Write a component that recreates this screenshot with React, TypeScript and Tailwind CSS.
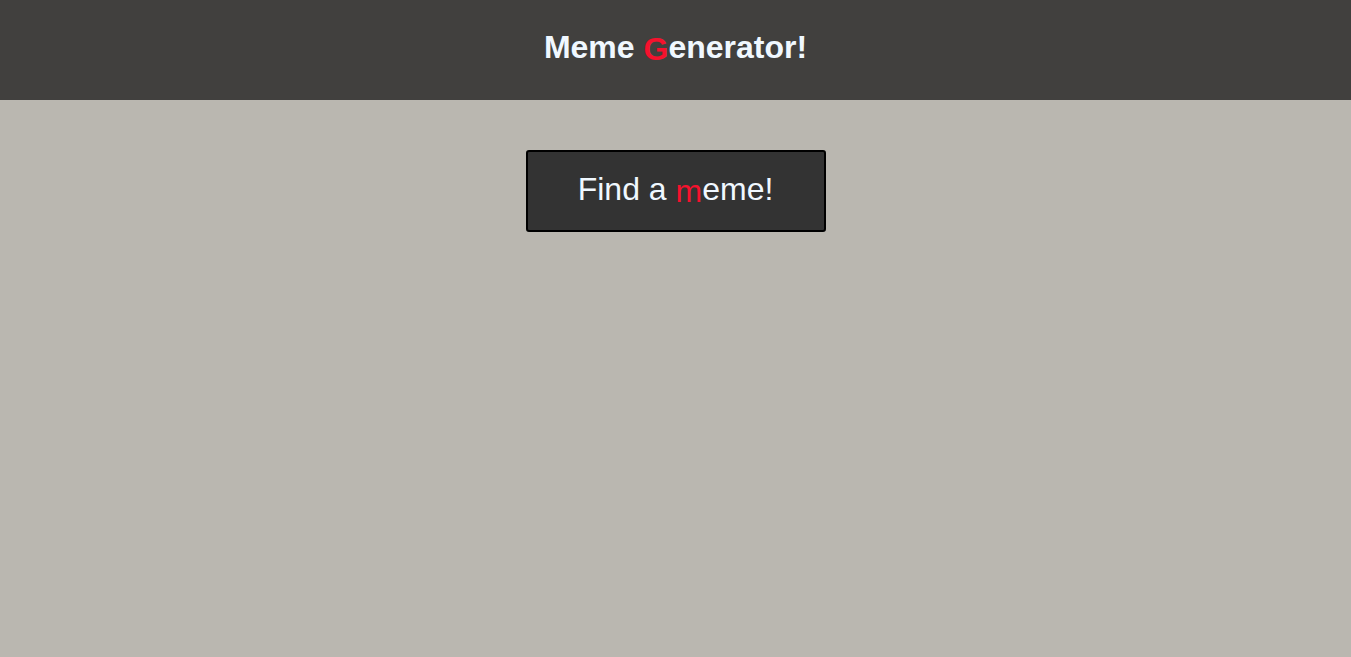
import React from "react";

export default function App() {
  return (
    <div className="min-h-[657px] w-full bg-[#bab7b0] font-['Liberation_Sans',Arial,sans-serif]">
      <header className="flex h-[100px] items-center justify-center bg-[#41403e] pb-[6px]">
        <h1 className="text-[32px] font-bold leading-normal text-[#f0f8ff]">
          Meme <span className="relative top-[2px] text-[#f5122d]">G</span>enerator!
        </h1>
      </header>
      <main className="flex justify-center pt-[50px]">
        <button className="flex h-[82px] w-[300px] items-center justify-center rounded-[3px] border-2 border-black bg-[#333333] pb-[5px] text-[32px] leading-normal text-[#f0f8ff]">
          <span>
            Find a <span className="relative top-[2px] text-[#f5122d]">m</span>eme!
          </span>
        </button>
      </main>
    </div>
  );
}
